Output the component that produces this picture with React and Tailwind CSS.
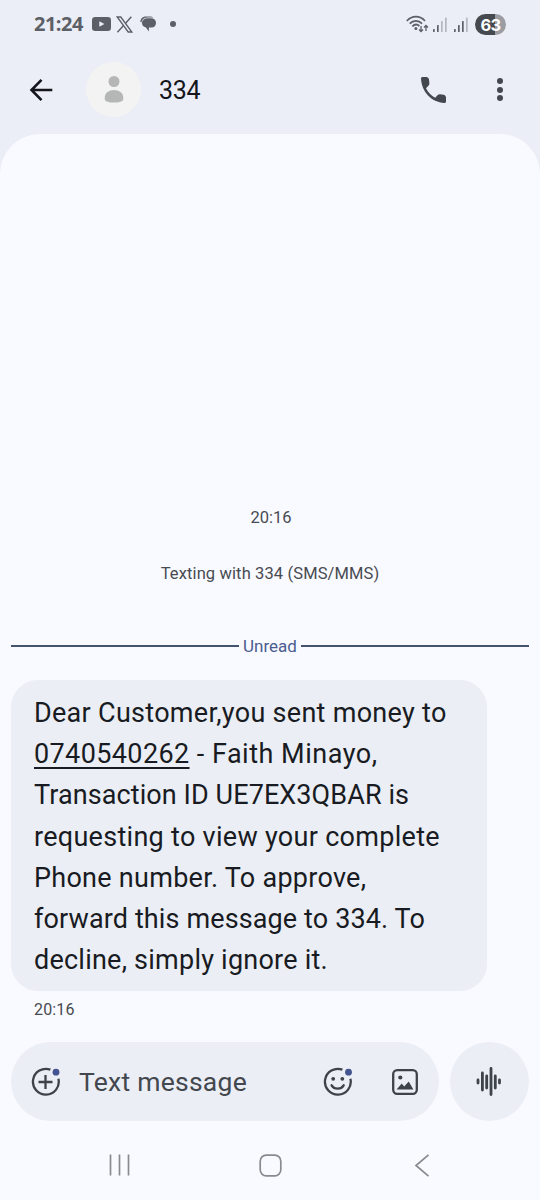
import React from "react";

const messageLines = [
  { text: "Dear Customer,you sent money to", className: "tracking-[0.29px]" },
  { link: "0740540262", text: " - Faith Minayo,", className: "tracking-[0.51px]" },
  { text: "Transaction ID UE7EX3QBAR is", className: "tracking-[0.09px]" },
  { text: "requesting to view your complete", className: "tracking-[0.29px]" },
  { text: "Phone number. To approve,", className: "tracking-[0.27px]" },
  { text: "forward this message to 334. To", className: "tracking-[0.12px]" },
  { text: "decline, simply ignore it.", className: "tracking-[0.23px]" },
];

const YoutubeIcon = () => (
  <svg width="19" height="14" viewBox="0 0 19 14">
    <rect width="19" height="14" rx="3.2" fill="#5c5f66" />
    <path d="M7.3 4.2v5.6L12.4 7z" fill="#ebeef6" />
  </svg>
);

const XIcon = () => (
  <svg width="17" height="17" viewBox="0 0 17 17" fill="none" stroke="#5c5f66">
    <path d="M1.2 1h3.6l11 15h-3.6z" strokeWidth="1.3" />
    <path d="M15.3.8 9.6 7.2M7.3 9.8 1.4 16.2" strokeWidth="1.4" />
  </svg>
);

const MessagesIcon = () => (
  <svg width="17" height="16" viewBox="0 0 17 16" fill="#5c5f66">
    <path d="M.3 5.8C.6 2.4 3 .6 6.3.6h4.2c1.2 0 2 .3 2.7.8H8C4.3 1.4 2 3 1.4 6.4Z" />
    <path d="M8 2.2h3c3 0 5 1.9 5 4.7 0 2.6-1.8 4.4-4.4 4.6L8.9 11.6V15.6L5.7 11.3C3.2 10.6 2 9.2 2 7c0-2.9 2.6-4.8 6-4.8Z" />
  </svg>
);

const WifiIcon = () => (
  <svg width="23" height="18" viewBox="0 0 23 18" fill="none" stroke="#5c5f66" strokeWidth="1.7">
    <path d="M.8 6C5.9.2 14 .2 19 6" />
    <path d="M3.7 8.7C7.4 4.8 12.4 4.8 16.1 8.7" />
    <path d="M6.3 11.3C8.7 9 11.2 9 13.4 11" />
    <circle cx="9.9" cy="13.6" r="1.5" fill="#5c5f66" stroke="none" />
    <path d="M15 11v5.5M13 14.5l2 2 2-2M20 16v-5.5M18 12.5l2-2 2 2" strokeWidth="1.3" />
  </svg>
);

const SignalIcon = ({ level }) => (
  <svg width="14" height="15" viewBox="0 0 14 15">
    {[3, 7, 11, 14.5].map((h, i) => (
      <rect key={i} x={i * 4} y={15 - h} width="1.7" height={h} rx=".6" fill={i < level ? "#5c5f66" : "#b4b7be"} />
    ))}
  </svg>
);

const StatusBar = () => (
  <div className="flex h-12 items-center justify-between pl-[34px] pr-[34px]">
    <div className="flex items-center">
      <span className="w-[58px] font-['Open_Sans',sans-serif] text-[20px] font-bold leading-6 tracking-[-0.5px] text-[#5c5f66]">
        21:24
      </span>
      <YoutubeIcon />
      <span className="ml-[5px]"><XIcon /></span>
      <span className="ml-[7px]"><MessagesIcon /></span>
      <span className="ml-[13px] size-[6px] rounded-full bg-[#5c5f66]" />
    </div>
    <div className="flex items-center">
      <span className="mr-[4px]"><WifiIcon /></span>
      <span className="mr-[7px]"><SignalIcon level={2} /></span>
      <span className="mr-[7px]"><SignalIcon level={3} /></span>
      <div className="flex h-[21px] w-[31px] items-center justify-center rounded-full bg-linear-to-r from-[#46494e] from-63% to-[#9b9da3] to-63% pt-[1px] font-['Inter',sans-serif] text-[16.5px] font-bold leading-[20px] tracking-[-0.8px] text-white">
        63
      </div>
    </div>
  </div>
);

const Toolbar = () => (
  <div className="flex h-[86px] items-center pb-[3px] pl-[29px]">
    <svg width="24" height="24" viewBox="0 0 24 24" fill="none" stroke="#14161c" strokeWidth="2.6">
      <path d="M12.5 1.8 2.5 12l10 10.2M2.5 12H23.3" />
    </svg>
    <div className="ml-[33px] flex size-[55px] items-center justify-center rounded-full bg-[#f3f3f3]">
      <svg width="20" height="27" viewBox="0 0 20 27" fill="#b5b6b6">
        <circle cx="10" cy="5.5" r="5.5" />
        <path d="M.8 21.5C.8 16.8 5 14 10 14s9.2 2.8 9.2 7.5v1.7C19.2 25.8 14 26.5 10 26.5S.8 25.8.8 23.2Z" />
      </svg>
    </div>
    <h1 className="ml-[18px] w-[262px] pt-[2px] text-[25px] tracking-[-0.3px] text-[#15171d]">334</h1>
    <svg width="25" height="26" viewBox="3 3 18 18" preserveAspectRatio="none" fill="#43474e">
      <path d="M19.23 15.26l-2.54-.29c-.61-.07-1.21.14-1.64.57l-1.84 1.84c-2.83-1.44-5.15-3.75-6.59-6.59l1.85-1.85c.43-.43.64-1.03.57-1.64l-.29-2.52C8.64 3.77 7.79 3 6.77 3H4C3.4 3 3 3.5 3 4.1 3.53 13.4 10.4 20.5 19.9 21c.6 0 1.1-.5 1.1-1.1v-2.65c.01-1.01-.76-1.87-1.77-1.99z" />
    </svg>
    <div className="ml-[51px] flex flex-col gap-[2.5px]">
      <span className="size-[6px] rounded-full bg-[#43474e]" />
      <span className="size-[6px] rounded-full bg-[#43474e]" />
      <span className="size-[6px] rounded-full bg-[#43474e]" />
    </div>
  </div>
);

const Conversation = () => (
  <main className="flex h-[908px] flex-col rounded-t-[40px] bg-[#f9faff] px-[11px] pt-[373px] text-[#474a51]">
    <p className="pl-[2px] text-center text-[16.5px] leading-[22px]">20:16</p>
    <p className="mt-[34px] text-center text-[16.5px] leading-[22px] tracking-[0.12px]">Texting with 334 (SMS/MMS)</p>

    {/* Unread divider */}
    <div className="mt-[50px] flex items-center gap-[4px] text-[#4b5d8f]">
      <span className="h-[1.5px] flex-1 bg-[#44546f]" />
      <span className="text-[17px] leading-[22px]">Unread</span>
      <span className="h-[1.5px] flex-1 bg-[#44546f]" />
    </div>

    <div className="mt-[23px] h-[311px] w-[476px] rounded-[27px] bg-[#ebeef5] pl-[23px] pt-[13px] text-[27px] leading-[41.2px] text-[#191b22]">
      {messageLines.map((line) => (
        <p key={line.text} className={`whitespace-pre ${line.className}`}>
          {line.link && (
            <a className="tracking-[0.38px] underline decoration-2 underline-offset-[4px]">{line.link}</a>
          )}
          {line.text}
        </p>
      ))}
    </div>
    <p className="mt-[9px] pl-[23px] text-[16px] leading-[20px] tracking-[0.15px]">20:16</p>
  </main>
);

const Composer = () => (
  <div className="flex h-[79px] gap-[11px] px-[11px]">
    <div className="flex w-[428px] items-center rounded-full bg-[#ebeef5] pl-[20px]">
      <svg width="30" height="30" viewBox="0 0 30 30" fill="none" stroke="#3e4249" strokeWidth="2.3">
        <path d="M19.4 2.7A12.9 12.9 0 1 0 27.4 11.8M14.5 8v14M7.5 15h14" />
        <circle cx="25" cy="5.2" r="3.4" fill="#435490" stroke="none" />
      </svg>
      <span className="ml-[18px] w-[244px] text-[26.5px] tracking-[0.25px] text-[#43474e]">Text message</span>
      <svg width="30" height="30" viewBox="0 0 30 30" fill="none" stroke="#3e4249" strokeWidth="2.3">
        <path d="M19.4 2.7A12.9 12.9 0 1 0 27.4 11.8" />
        <path d="M8.6 18.3C11.3 22.7 18 22.7 20.7 18.3" strokeLinecap="round" />
        <circle cx="10.2" cy="11.8" r="1.9" fill="#3e4249" stroke="none" />
        <circle cx="19.3" cy="11.8" r="1.9" fill="#3e4249" stroke="none" />
        <circle cx="25.5" cy="5.2" r="3.4" fill="#435490" stroke="none" />
      </svg>
      <svg className="ml-[39px]" width="26" height="26" viewBox="0 0 26 26" fill="#3e4249">
        <rect x="1.2" y="1.2" width="23.6" height="23.6" rx="4" fill="none" stroke="#3e4249" strokeWidth="2.3" />
        <circle cx="8.3" cy="8.5" r="2.1" />
        <path d="M4.6 20.5 9.7 14.5 12.2 17.4 16.7 12.5 21.4 20.5Z" />
      </svg>
    </div>
    <div className="flex size-[79px] items-center justify-center rounded-full bg-[#ebeef5] pr-[2px]">
      <svg width="26" height="29" viewBox="0 0 26 29" fill="none" stroke="#3e4249" strokeWidth="2.8" strokeLinecap="round">
        <path d="M2 13v3M6.4 6v17M10.7 9v12M15 1.5v26M19.3 9v12M23.5 13v3" />
      </svg>
    </div>
  </div>
);

const NavBar = () => (
  <div className="flex h-[79px] items-center pt-[9px] pl-[108px] text-[#888a90]">
    <svg width="22" height="22" viewBox="0 0 22 22" fill="none" stroke="currentColor" strokeWidth="1.7">
      <path d="M2.5.5v21M11.5.5v21M20.5.5v21" />
    </svg>
    <svg className="ml-[129px]" width="23" height="23" viewBox="0 0 23 23" fill="none" stroke="currentColor" strokeWidth="1.7">
      <rect x="1.2" y="1.2" width="20.6" height="20.6" rx="6" />
    </svg>
    <svg className="ml-[132px]" width="16" height="23" viewBox="0 0 16 23" fill="none" stroke="currentColor" strokeWidth="1.7">
      <path d="M14.5.8 2 11.5l12.5 10.7" />
    </svg>
  </div>
);

const App = () => {
  return (
    <div className="h-[1200px] w-[540px] overflow-hidden bg-[#f9faff] font-['Roboto',sans-serif]">
      <header className="bg-[#ebeef6]">
        <StatusBar />
        <Toolbar />
      </header>
      <div className="bg-linear-to-b from-[#ebeef6] from-50% to-[#f9faff] to-50%">
        <Conversation />
      </div>
      <Composer />
      <NavBar />
    </div>
  );
};

export default App;
